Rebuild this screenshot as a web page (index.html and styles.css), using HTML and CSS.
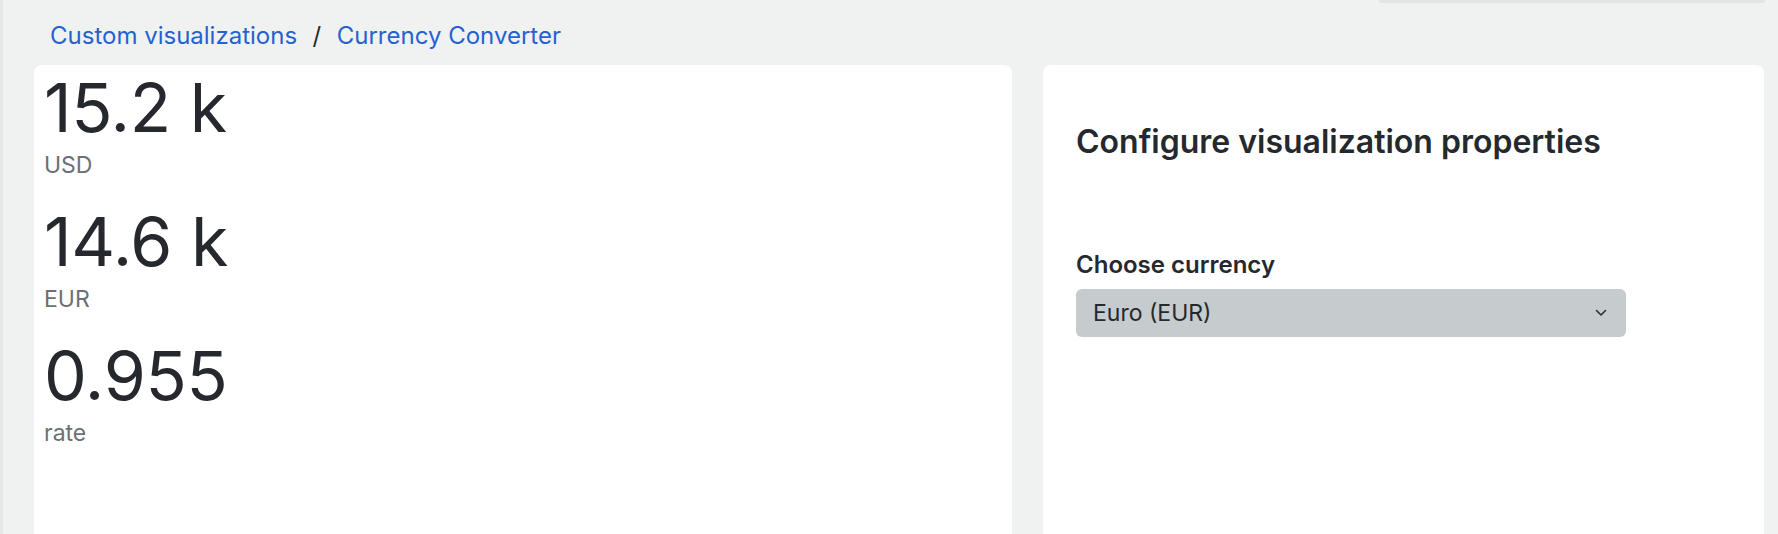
FILE: index.html
```html
<!DOCTYPE html>
<html lang="en">
<head>
<meta charset="utf-8">
<title>Currency Converter</title>
<link rel="stylesheet" href="styles.css">
</head>
<body>
<div class="page">
  <div class="topbar"><div class="top-pill"></div></div>
  <nav class="breadcrumb">
    <a class="crumb" href="#">Custom visualizations</a>
    <span class="sep">/</span>
    <a class="crumb" href="#">Currency Converter</a>
  </nav>
  <main class="layout">
    <section class="card viz">
      <div class="metric">
        <div class="value">15.2 k</div>
        <div class="label">USD</div>
      </div>
      <div class="metric">
        <div class="value">14.6 k</div>
        <div class="label">EUR</div>
      </div>
      <div class="metric">
        <div class="value">0.955</div>
        <div class="label">rate</div>
      </div>
    </section>
    <aside class="card config">
      <h2 class="config-title">Configure visualization properties</h2>
      <label class="field-label" for="currency">Choose currency</label>
      <div class="select" id="currency">
        <span class="select-value">Euro (EUR)</span>
        <svg class="chevron" width="12" height="8" viewBox="0 0 12 8" aria-hidden="true"><path d="M1.5 1.5 6 6l4.5-4.5" fill="none" stroke="#2b2f33" stroke-width="1.6" stroke-linecap="round" stroke-linejoin="round"/></svg>
      </div>
    </aside>
  </main>
</div>
</body>
</html>
```
FILE: styles.css
```css
html, body {
  margin: 0;
  padding: 0;
  height: 534px;
  overflow: hidden;
}
body {
  background: #f0f2f1;
  font-family: Inter, "Noto Sans", sans-serif;
  color: #25292e;
}
.page {
  border-left: 3px solid #e6e8e8;
  height: 534px;
  display: flex;
  flex-direction: column;
  overflow: hidden;
}
.topbar {
  flex-shrink: 0;
  display: flex;
  justify-content: flex-end;
  padding-right: 13px;
  height: 3px;
}
.top-pill {
  width: 386px;
  height: 3px;
  background: #e3e4e6;
  border-radius: 0 0 4px 4px;
}
.breadcrumb {
  flex-shrink: 0;
  display: flex;
  align-items: center;
  gap: 15.5px;
  padding-left: 47px;
  padding-top: 2px;
  height: 60px;
  font-size: 24px;
}
.crumb {
  color: #2462d1;
  text-decoration: none;
}
.sep {
  color: #25292e;
}
.layout {
  flex-shrink: 0;
  display: grid;
  grid-template-columns: 978px 721px;
  gap: 31px;
  padding-left: 31px;
}
.card {
  background: #ffffff;
  border-radius: 8px 8px 0 0;
  height: 520px;
  box-sizing: border-box;
}
.viz {
  padding: 4px 10px 0 10px;
}
.metric {
  margin-bottom: 24px;
}
.value {
  font-size: 68px;
  line-height: 76px;
  font-weight: 400;
  letter-spacing: -0.3px;
  color: #25292e;
}
.label {
  margin-top: 6px;
  font-size: 23px;
  line-height: 28px;
  color: #6b7075;
}
.config {
  padding: 57px 33px 0 33px;
}
.config-title {
  margin: 0 0 88px 0;
  font-size: 32px;
  font-weight: 600;
  line-height: 40px;
}
.field-label {
  display: block;
  font-size: 24px;
  font-weight: 600;
  line-height: 30px;
  margin-bottom: 9px;
}
.select {
  width: 550px;
  height: 48px;
  box-sizing: border-box;
  background: #c6cbce;
  border-radius: 6px;
  display: flex;
  align-items: center;
  justify-content: space-between;
  padding: 0 19px 0 17px;
  font-size: 23px;
}
.chevron {
  display: block;
}
```
